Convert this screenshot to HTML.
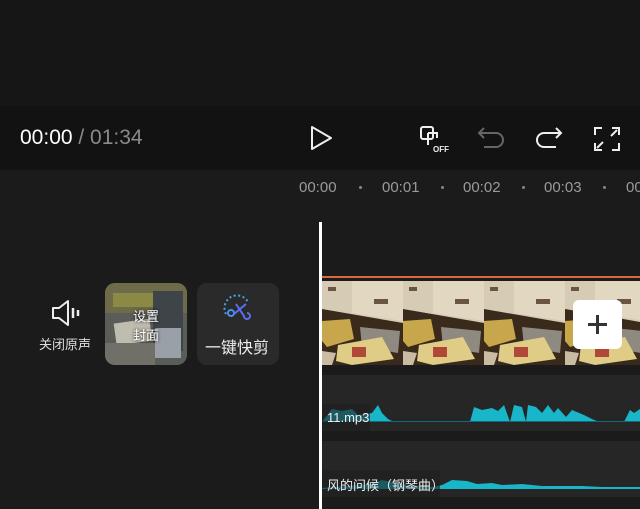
<!DOCTYPE html>
<html><head><meta charset="utf-8"><style>
*{margin:0;padding:0;box-sizing:border-box}
body{width:640px;height:509px;background:#1b1b1b;position:relative;overflow:hidden;font-family:"Liberation Sans","Noto Sans CJK SC",sans-serif;color:#fff}
.a{position:absolute}
.top{left:0;top:0;width:640px;height:106px;background:#161616}
.bar{left:0;top:106px;width:640px;height:64px;background:#121212}
.tc{left:20px;top:126px;font-size:21px;color:#fff}
.tc span{color:#8a8a8a}
.ruler{top:179px;font-size:15px;color:#9a9a9a}
.dot{top:186px;width:3px;height:3px;border-radius:50%;background:#888}
.frame{top:281px;width:81px;height:84px;overflow:hidden}
.track{left:322px;width:318px;height:56px;background:#262626}
</style></head><body>
<div class="a top"></div>
<div class="a bar"></div>
<div class="a tc">00:00 <span>/ 01:34</span></div>
<svg class="a" style="left:308px;top:125px" width="26" height="26" viewBox="0 0 26 26"><path d="M4 2 L23 13 L4 24 Z" fill="none" stroke="#eee" stroke-width="2" stroke-linejoin="round"/></svg>
<svg class="a" style="left:418px;top:124px" width="34" height="30" viewBox="0 0 34 30"><rect x="3" y="3" width="12" height="12" rx="2" fill="none" stroke="#eee" stroke-width="2"/><path d="M10 9 h9 v5 M10 9 v12" fill="none" stroke="#eee" stroke-width="2"/><text x="15" y="28" font-size="8" font-weight="bold" fill="#eee" font-family="Liberation Sans">OFF</text></svg>
<svg class="a" style="left:476px;top:124px" width="30" height="28" viewBox="0 0 30 28"><path d="M8 4 L3 9 L8 14 M3 9 H20 a7 7 0 0 1 0 14 H8" fill="none" stroke="#666" stroke-width="2"/></svg>
<svg class="a" style="left:534px;top:124px" width="30" height="28" viewBox="0 0 30 28"><path d="M22 4 L27 9 L22 14 M27 9 H10 a7 7 0 0 0 0 14 H22" fill="none" stroke="#eee" stroke-width="2"/></svg>
<svg class="a" style="left:593px;top:126px" width="28" height="26" viewBox="0 0 28 26"><path d="M2 9 V2 H9 M19 2 H26 V9 M26 17 V24 H19 M9 24 H2 V17 M4 22 L10 16 M24 4 L18 10" fill="none" stroke="#eee" stroke-width="2"/></svg>
<div class="a ruler" style="left:299px">00:00</div><div class="a dot" style="left:359px"></div>
<div class="a ruler" style="left:382px">00:01</div><div class="a dot" style="left:441px"></div>
<div class="a ruler" style="left:463px">00:02</div><div class="a dot" style="left:522px"></div>
<div class="a ruler" style="left:544px">00:03</div><div class="a dot" style="left:603px"></div>
<div class="a ruler" style="left:626px">00:04</div>
<svg class="a" style="left:50px;top:298px" width="34" height="30" viewBox="0 0 34 30"><path d="M3 10 H9 L18 3 V27 L9 20 H3 Z" fill="none" stroke="#eee" stroke-width="2" stroke-linejoin="round"/><path d="M23 10 V20 M28 12 V18" stroke="#eee" stroke-width="2.5"/></svg>
<div class="a" style="left:39px;top:334px;font-size:13px;color:#ddd">关闭原声</div>
<div class="a" style="left:105px;top:283px;width:82px;height:82px;border-radius:10px;overflow:hidden;background:#5a5c58">
<svg width="82" height="82"><rect width="82" height="30" fill="#6e6b4a"/><rect x="8" y="10" width="50" height="14" fill="#8a8a44"/><rect x="48" y="8" width="30" height="60" fill="#3e4448"/><rect x="10" y="38" width="36" height="22" fill="#bfbcb0" transform="rotate(-8 28 49)"/><rect x="50" y="45" width="26" height="30" fill="#9aa0a8"/><rect x="0" y="60" width="50" height="22" fill="#707068"/></svg></div>
<div class="a" style="left:133px;top:307px;font-size:13px;color:#fff;line-height:19px;text-align:center;text-shadow:0 0 3px #000">设置<br>封面</div>
<div class="a" style="left:197px;top:283px;width:82px;height:82px;border-radius:10px;background:#2a2a2a"></div>
<svg class="a" style="left:222px;top:294px" width="32" height="30" viewBox="0 0 32 30"><path d="M4 20 A12 12 0 0 1 26 8" fill="none" stroke="#3fa7e8" stroke-width="2" stroke-dasharray="2 2.5"/><circle cx="9" cy="19" r="3" fill="none" stroke="#4a8ff0" stroke-width="2"/><path d="M12 20 L24 10 M14 10 L22 22 a3 3 0 1 0 3 -3" fill="none" stroke="#5a6ff0" stroke-width="2"/></svg>
<div class="a" style="left:205px;top:334px;font-size:16px;color:#eee">一键快剪</div>
<div class="a" style="left:322px;top:276px;width:318px;height:2px;background:#e0663f"></div>
<svg class="a" style="left:322px;top:281px" width="318" height="84">
<defs><g id="f">
<rect width="81" height="84" fill="#3a2a1c"/>
<polygon points="0,0 81,0 81,42 0,28" fill="#d6cbb4"/>
<polygon points="30,0 81,0 81,40 30,32" fill="#e2d7c0"/>
<rect x="6" y="6" width="8" height="4" fill="#6a5540"/><rect x="52" y="18" width="14" height="5" fill="#6a5540"/>
<polygon points="0,40 28,38 32,58 5,66 0,60" fill="#c7a64c"/>
<polygon points="38,46 78,50 76,72 40,66" fill="#8e8a80"/>
<polygon points="16,64 60,56 72,78 30,84 14,80" fill="#dfcc86"/>
<rect x="30" y="66" width="14" height="10" fill="#b04838"/>
<polygon points="0,70 14,72 10,84 0,84" fill="#c9bca2"/>
</g></defs>
<use href="#f" x="0"/><use href="#f" x="81"/><use href="#f" x="162"/><use href="#f" x="243"/>
</svg>
<div class="a" style="left:573px;top:300px;width:49px;height:49px;border-radius:6px;background:#fff"></div>
<svg class="a" style="left:585px;top:312px" width="25" height="25" viewBox="0 0 25 25"><path d="M12.5 3 V22 M3 12.5 H22" stroke="#333" stroke-width="3"/></svg>
<div class="a track" style="top:375px"></div>
<svg class="a" style="left:322px;top:395px" width="318" height="28" viewBox="0 0 318 28"><path d="M0 27 L10 14 L20 16 L30 14 L36 20 L50 18 L56 10 L60 18 L66 24 L72 27 L148 27 L152 12 L160 15 L170 13 L176 16 L182 10 L188 27 L192 10 L200 12 L204 27 L206 10 L214 12 L220 18 L226 10 L232 18 L236 13 L244 22 L250 15 L262 20 L272 25 L278 27 L302 27 L308 15 L312 18 L318 14 L318 27 Z" fill="#19b5c8"/></svg>
<div class="a" style="left:322px;top:421px;width:318px;height:1px;background:#146b78"></div>
<div class="a" style="left:322px;top:404px;width:48px;height:27px;background:rgba(30,30,30,.6)"></div>
<div class="a" style="left:327px;top:410px;font-size:13px;color:#eee">11.mp3</div>
<div class="a track" style="top:441px"></div>
<svg class="a" style="left:322px;top:470px" width="318" height="20" viewBox="0 0 318 20"><path d="M0 18 L50 14 L60 10 L80 14 L96 16 L110 17 L120 15 L130 10 L145 11 L155 14 L170 13 L180 15 L200 14 L220 16 L260 16 L280 17 L318 17 L318 19 L0 19 Z" fill="#19b5c8"/></svg>
<div class="a" style="left:322px;top:470px;width:118px;height:27px;background:rgba(30,30,30,.6)"></div>
<div class="a" style="left:327px;top:475px;font-size:13px;color:#eee">风的问候（钢琴曲）</div>
<div class="a" style="left:319px;top:222px;width:3px;height:287px;background:#fff"></div>
</body></html>
